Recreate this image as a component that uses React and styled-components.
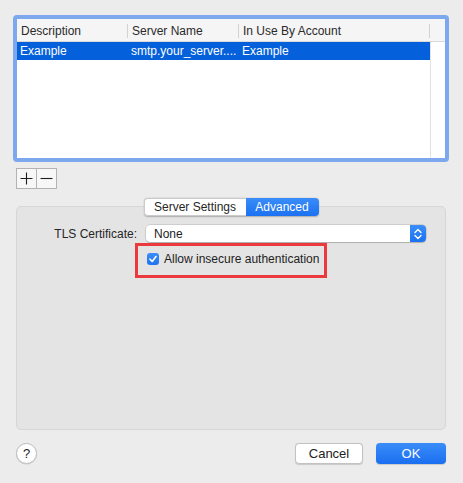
import styled, { createGlobalStyle } from "styled-components";

const GlobalStyle = createGlobalStyle`
  html, body {
    margin: 0;
    background: #ececec;
  }
  body {
    font-family: "Liberation Sans", Arial, sans-serif;
    font-size: 12px;
    color: #222;
  }
`;

const servers = [
  {
    description: "Example",
    serverName: "smtp.your_server....",
    account: "Example",
  },
];

const App = () => {
  return (
    <>
      <GlobalStyle />
      <Page>
        <TableFrame>
          <TableHeader>
            <HeaderCell $width={110}>Description</HeaderCell>
            <HeaderDivider />
            <HeaderCell $width={110}>Server Name</HeaderCell>
            <HeaderDivider />
            <HeaderCell $width={190}>In Use By Account</HeaderCell>
            <HeaderDivider />
            <HeaderCell />
          </TableHeader>
          <TableBody>
            <Rows>
              {servers.map((s, i) => (
                <Row key={i} $selected>
                  <RowCell $width={111}>{s.description}</RowCell>
                  <RowCell $width={111}>{s.serverName}</RowCell>
                  <RowCell $width={191}>{s.account}</RowCell>
                </Row>
              ))}
            </Rows>
            <ScrollColumn />
          </TableBody>
        </TableFrame>

        <Toolbar>
          <SquareButton aria-label="Add">
            <svg width="13" height="13" viewBox="0 0 13 13">
              <path d="M6.5 0.5v12M0.5 6.5h12" stroke="#1e1e1e" strokeWidth="1.1" />
            </svg>
          </SquareButton>
          <SquareButton aria-label="Remove">
            <svg width="13" height="13" viewBox="0 0 13 13">
              <path d="M0.5 6.5h12" stroke="#1e1e1e" strokeWidth="1.1" />
            </svg>
          </SquareButton>
        </Toolbar>

        <TabSection>
          <Segmented>
            <Segment $width={102}>Server Settings</Segment>
            <Segment $width={73} $active>
              Advanced
            </Segment>
          </Segmented>
          <TabBox>
            <FormGrid>
              <FieldLabel>TLS Certificate:</FieldLabel>
              <Popup>
                <PopupValue>None</PopupValue>
                <PopupStepper>
                  <svg width="8" height="12" viewBox="0 0 8 12">
                    <path
                      d="M1 4.5L4 1.5L7 4.5M1 7.5L4 10.5L7 7.5"
                      fill="none"
                      stroke="#fff"
                      strokeWidth="1.4"
                      strokeLinecap="round"
                      strokeLinejoin="round"
                    />
                  </svg>
                </PopupStepper>
              </Popup>
              <span />
              <Highlight>
                <CheckRow>
                  <Checkbox>
                    <svg width="10" height="10" viewBox="0 0 10 10">
                      <path
                        d="M2 5.2L4.2 7.5L8 2.5"
                        fill="none"
                        stroke="#fff"
                        strokeWidth="1.6"
                        strokeLinecap="round"
                        strokeLinejoin="round"
                      />
                    </svg>
                  </Checkbox>
                  Allow insecure authentication
                </CheckRow>
              </Highlight>
            </FormGrid>
          </TabBox>
        </TabSection>

        <Footer>
          <HelpButton aria-label="Help">?</HelpButton>
          <ButtonGroup>
            <PushButton>Cancel</PushButton>
            <PushButton $primary>OK</PushButton>
          </ButtonGroup>
        </Footer>
      </Page>
    </>
  );
};

const Page = styled.div`
  display: flex;
  flex-direction: column;
  padding: 15px 14px 20px 13px;
  min-height: 483px;
  box-sizing: border-box;
`;

const TableFrame = styled.div`
  height: 147px;
  box-sizing: border-box;
  border: 4px solid #7ea8ee;
  border-radius: 4px;
  background: #fff;
  display: flex;
  flex-direction: column;
  overflow: hidden;
`;

const TableHeader = styled.div`
  display: flex;
  align-items: center;
  height: 23px;
  box-sizing: border-box;
  padding-top: 1px;
  background: #f5f5f5;
  border-bottom: 1px solid #dadada;
  color: #2a2a2a;
`;

const HeaderCell = styled.div`
  width: ${(p) => (p.$width ? `${p.$width}px` : "auto")};
  flex: ${(p) => (p.$width ? "none" : "1")};
  padding-left: 4px;
  box-sizing: border-box;
  white-space: nowrap;
`;

const HeaderDivider = styled.div`
  width: 1px;
  height: 14px;
  background: #d2d2d2;
`;

const TableBody = styled.div`
  flex: 1;
  display: flex;
`;

const Rows = styled.div`
  flex: 1;
  display: flex;
  flex-direction: column;
`;

const Row = styled.div`
  display: flex;
  align-items: center;
  height: 18px;
  background: ${(p) => (p.$selected ? "#0461db" : "transparent")};
  color: ${(p) => (p.$selected ? "#fff" : "#222")};
`;

const RowCell = styled.div`
  width: ${(p) => p.$width}px;
  padding-left: 3px;
  box-sizing: border-box;
  white-space: nowrap;
  overflow: hidden;
`;

const ScrollColumn = styled.div`
  width: 15px;
  border-left: 1px solid #e2e2e2;
  background: #fff;
`;

const Toolbar = styled.div`
  display: flex;
  margin: 6px 0 0 3px;
`;

const SquareButton = styled.button`
  width: 21px;
  height: 21px;
  padding: 0;
  display: flex;
  align-items: center;
  justify-content: center;
  background: #f7f7f7;
  border: 1px solid #b3b3b3;

  & + & {
    margin-left: -1px;
  }
`;

const TabSection = styled.div`
  display: flex;
  flex-direction: column;
  align-items: center;
  margin: 9px 3px 0 3px;
`;

const Segmented = styled.div`
  display: flex;
  height: 18px;
  margin-bottom: -10px;
  position: relative;
  z-index: 1;
  border-radius: 4px;
  box-shadow: 0 0.5px 1.5px rgba(0, 0, 0, 0.25);
`;

const Segment = styled.div`
  width: ${(p) => p.$width}px;
  display: flex;
  align-items: center;
  justify-content: center;
  font-size: 12px;
  box-sizing: border-box;
  color: ${(p) => (p.$active ? "#fff" : "#262626")};
  background: ${(p) =>
    p.$active ? "linear-gradient(#3a8df8, #1b71f1)" : "#fff"};
  border: ${(p) => (p.$active ? "none" : "1px solid #cbcbcb")};
  border-right: none;

  &:first-child {
    border-radius: 4px 0 0 4px;
  }
  &:last-child {
    border-radius: 0 4px 4px 0;
  }
`;

const TabBox = styled.div`
  align-self: stretch;
  height: 224px;
  box-sizing: border-box;
  background: #e4e4e4;
  border: 1px solid #d6d6d6;
  border-radius: 5px;
  padding: 18px 19px 0 0;
`;

const FormGrid = styled.div`
  display: grid;
  grid-template-columns: 120px 1fr;
  column-gap: 9px;
  row-gap: 1px;
  align-items: center;
`;

const FieldLabel = styled.label`
  text-align: right;
  color: #262626;
`;

const Popup = styled.div`
  display: flex;
  height: 17px;
  background: #fff;
  border-radius: 4px;
  box-shadow: 0 0 0 0.5px rgba(0, 0, 0, 0.2), 0 1px 1px rgba(0, 0, 0, 0.15);
  overflow: hidden;
`;

const PopupValue = styled.div`
  flex: 1;
  display: flex;
  align-items: center;
  padding-left: 8px;
  color: #222;
`;

const PopupStepper = styled.div`
  width: 16px;
  display: flex;
  align-items: center;
  justify-content: center;
  background: linear-gradient(#3b8ef8, #1c71f1);
`;

const Highlight = styled.div`
  justify-self: start;
  margin-left: -11px;
  width: 192px;
  height: 35px;
  box-sizing: border-box;
  border: 3px solid #ea3a3e;
  padding: 6px 0 0 9px;
`;

const CheckRow = styled.label`
  display: flex;
  align-items: center;
  gap: 5px;
  color: #222;
  white-space: nowrap;
`;

const Checkbox = styled.span`
  width: 12px;
  height: 12px;
  border-radius: 3px;
  background: linear-gradient(#3a8df8, #1f74f2);
  display: flex;
  align-items: center;
  justify-content: center;
`;

const Footer = styled.div`
  display: flex;
  justify-content: space-between;
  align-items: center;
  margin: 13px 3px 0 3px;
`;

const HelpButton = styled.button`
  width: 21px;
  height: 21px;
  padding: 0;
  border-radius: 50%;
  background: #fff;
  border: 1px solid #bdbdbd;
  box-shadow: 0 0.5px 1px rgba(0, 0, 0, 0.12);
  font-family: "Liberation Sans", Arial, sans-serif;
  font-size: 13px;
  color: #222;
  line-height: 19px;
`;

const ButtonGroup = styled.div`
  display: flex;
  gap: 13px;
`;

const PushButton = styled.button`
  width: ${(p) => (p.$primary ? "70px" : "68px")};
  height: 21px;
  padding: 0;
  border-radius: 4px;
  font-family: "Liberation Sans", Arial, sans-serif;
  font-size: 13px;
  color: ${(p) => (p.$primary ? "#fff" : "#222")};
  background: ${(p) =>
    p.$primary ? "linear-gradient(#3a8cf7, #1a6ff0)" : "#fff"};
  border: ${(p) => (p.$primary ? "none" : "1px solid #c2c2c2")};
  box-shadow: 0 0.5px 1px rgba(0, 0, 0, 0.15);
`;

export default App;
